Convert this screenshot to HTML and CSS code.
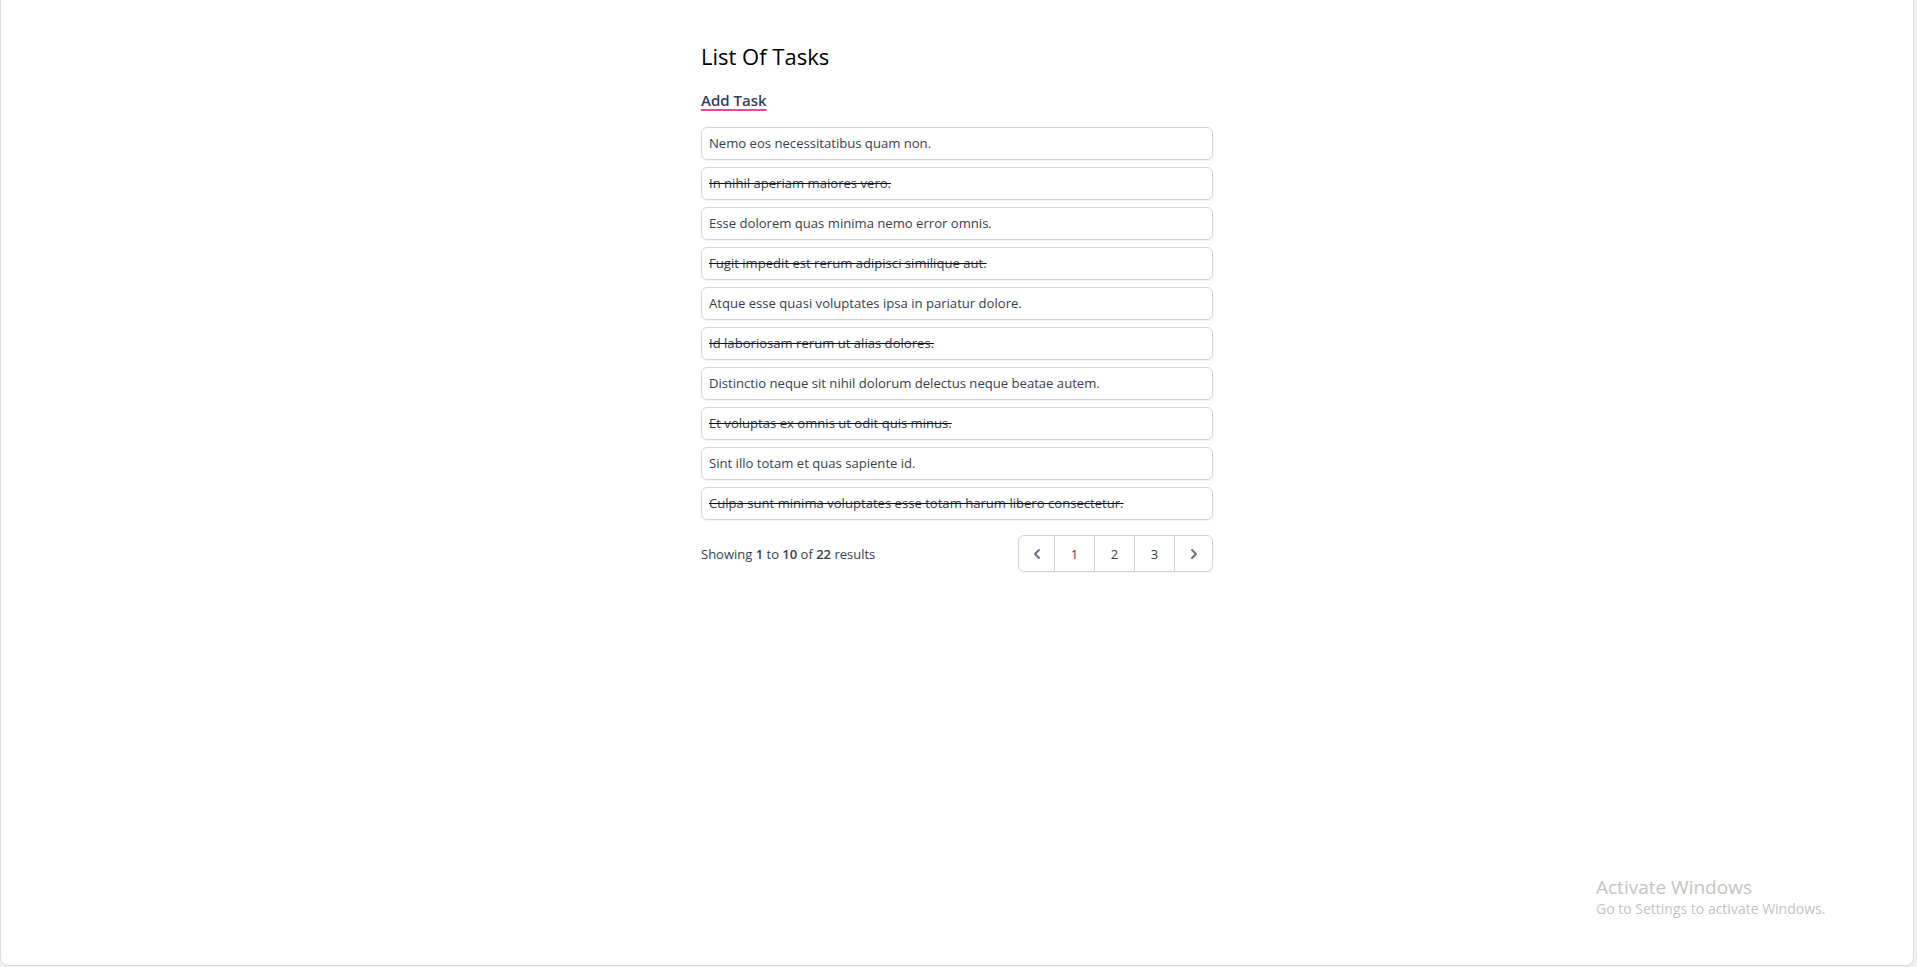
FILE: index.html
```html
<!DOCTYPE html>
<html lang="en">
<head>
<meta charset="utf-8">
<title>List Of Tasks</title>
<link rel="stylesheet" href="styles.css">
</head>
<body>
<div class="window">
  <main class="container">
    <h1 class="title">List Of Tasks</h1>
    <a class="add-link" href="#">Add Task</a>
    <ul class="tasks">
      <li class="task">Nemo eos necessitatibus quam non.</li>
      <li class="task done">In nihil aperiam maiores vero.</li>
      <li class="task">Esse dolorem quas minima nemo error omnis.</li>
      <li class="task done">Fugit impedit est rerum adipisci similique aut.</li>
      <li class="task">Atque esse quasi voluptates ipsa in pariatur dolore.</li>
      <li class="task done">Id laboriosam rerum ut alias dolores.</li>
      <li class="task">Distinctio neque sit nihil dolorum delectus neque beatae autem.</li>
      <li class="task done">Et voluptas ex omnis ut odit quis minus.</li>
      <li class="task">Sint illo totam et quas sapiente id.</li>
      <li class="task done">Culpa sunt minima voluptates esse totam harum libero consectetur.</li>
    </ul>
    <nav class="pager-row">
      <p class="showing">Showing <b>1</b> to <b>10</b> of <b>22</b> results</p>
      <div class="pager">
        <span class="pg pg-arrow pg-first"><svg width="20" height="20" viewBox="0 0 20 20" fill="currentColor"><path fill-rule="evenodd" d="M12.707 5.293a1 1 0 010 1.414L9.414 10l3.293 3.293a1 1 0 01-1.414 1.414l-4-4a1 1 0 010-1.414l4-4a1 1 0 011.414 0z" clip-rule="evenodd"/></svg></span>
        <span class="pg pg-num">1</span>
        <a class="pg pg-num" href="#">2</a>
        <a class="pg pg-num" href="#">3</a>
        <a class="pg pg-arrow pg-last" href="#"><svg width="20" height="20" viewBox="0 0 20 20" fill="currentColor"><path fill-rule="evenodd" d="M7.293 14.707a1 1 0 010-1.414L10.586 10 7.293 6.707a1 1 0 011.414-1.414l4 4a1 1 0 010 1.414l-4 4a1 1 0 01-1.414 0z" clip-rule="evenodd"/></svg></a>
      </div>
    </nav>
  </main>
  <div class="watermark">
    <div class="wm-title">Activate Windows</div>
    <div class="wm-sub">Go to Settings to activate Windows.</div>
  </div>
</div>
</body>
</html>
```

FILE: styles.css
```css
* { box-sizing: border-box; }
html, body {
  margin: 0;
  padding: 0;
  background: #f0f0f0;
}
body {
  font-family: "Open Sans", "Noto Sans", sans-serif;
  color: #374151;
}
.window {
  position: relative;
  width: 1914px;
  height: 966px;
  background: #ffffff;
  border: 1px solid #dddddd;
  border-top: none;
  border-radius: 0 0 8px 8px;
  overflow: hidden;
}
.container {
  width: 512px;
  margin: 0 auto;
  padding-top: 41px;
  display: flex;
  flex-direction: column;
}
.title {
  margin: 0;
  font-size: 22px;
  font-weight: 400;
  line-height: 30px;
  color: #000000;
}
.add-link {
  align-self: flex-start;
  margin-top: 19px;
  font-size: 15px;
  font-weight: 600;
  line-height: 20px;
  color: #374151;
  text-decoration: underline;
  text-decoration-color: #ec4899;
  text-decoration-thickness: 1.5px;
  text-underline-offset: 3px;
}
.tasks {
  list-style: none;
  margin: 17px 0 0;
  padding: 0;
  display: flex;
  flex-direction: column;
  gap: 7px;
}
.task {
  border: 1px solid #d1d5db;
  border-radius: 6px;
  box-shadow: 0 1px 2px rgba(0, 0, 0, 0.06);
  padding: 6px 7px;
  font-size: 13.1px;
  line-height: 19px;
  color: #374151;
}
.task.done {
  text-decoration: line-through;
  text-decoration-color: #111111;
}
.pager-row {
  margin-top: 15px;
  display: flex;
  align-items: center;
  justify-content: space-between;
}
.showing {
  margin: 0;
  font-size: 13px;
  line-height: 20px;
  color: #374151;
}
.showing b { font-weight: 600; }
.pager {
  display: flex;
  border-radius: 6px;
  box-shadow: 0 1px 2px rgba(0, 0, 0, 0.06);
}
.pg {
  display: flex;
  align-items: center;
  justify-content: center;
  height: 37px;
  border: 1px solid #d1d5db;
  background: #fff;
  margin-left: -1px;
  font-size: 13px;
  color: #374151;
  text-decoration: none;
}
.pg-num { width: 41px; }
.pg-arrow { width: 37px; color: #6b7280; }
.pg-first { margin-left: 0; border-radius: 6px 0 0 6px; }
.pg-last { width: 39px; border-radius: 0 6px 6px 0; }
.watermark {
  position: absolute;
  left: 1595px;
  top: 875px;
  color: #c4c4c4;
}
.wm-title {
  font-size: 19px;
  line-height: 24px;
}
.wm-sub {
  font-size: 14px;
  line-height: 20px;
}
```
